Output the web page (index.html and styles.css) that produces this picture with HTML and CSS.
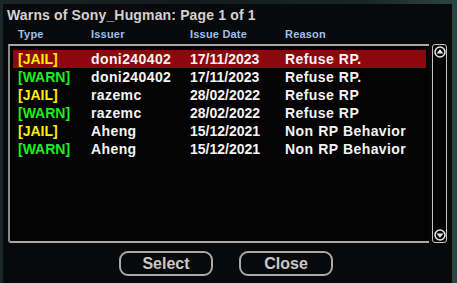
FILE: index.html
```html
<!DOCTYPE html>
<html lang="en">
<head>
    <meta charset="UTF-8">
    <title>Warns of Sony_Hugman</title>
    <link rel="stylesheet" href="styles.css">
</head>
<body>
    <div class="dialog">
        <div class="dialog-title">Warns of Sony_Hugman: Page 1 of 1</div>

        <!-- Column headers -->
        <div class="list-head">
            <span>Type</span>
            <span>Issuer</span>
            <span>Issue Date</span>
            <span>Reason</span>
        </div>

        <div class="list-area">
            <div class="list-box">
                <div class="row selected">
                    <span class="jail">[JAIL]</span><span class="txt">doni240402</span><span>17/11/2023</span><span class="txt">Refuse RP.</span>
                </div>
                <div class="row">
                    <span class="warn">[WARN]</span><span class="txt">doni240402</span><span>17/11/2023</span><span class="txt">Refuse RP.</span>
                </div>
                <div class="row">
                    <span class="jail">[JAIL]</span><span class="txt">razemc</span><span>28/02/2022</span><span class="txt">Refuse RP</span>
                </div>
                <div class="row">
                    <span class="warn">[WARN]</span><span class="txt">razemc</span><span>28/02/2022</span><span class="txt">Refuse RP</span>
                </div>
                <div class="row">
                    <span class="jail">[JAIL]</span><span class="txt">Aheng</span><span>15/12/2021</span><span class="txt">Non RP Behavior</span>
                </div>
                <div class="row">
                    <span class="warn">[WARN]</span><span class="txt">Aheng</span><span>15/12/2021</span><span class="txt">Non RP Behavior</span>
                </div>
            </div>

            <!-- Scroll bar -->
            <div class="scrollbar">
                <svg width="12" height="12" viewBox="0 0 12 12">
                    <circle cx="6" cy="6" r="5" fill="none" stroke="#e8e8e8" stroke-width="1.5"/>
                    <path d="M2.6 7.4 L6 3.2 L9.4 7.4 Z" fill="#e8e8e8"/>
                </svg>
                <svg width="12" height="12" viewBox="0 0 12 12">
                    <circle cx="6" cy="6" r="5" fill="none" stroke="#e8e8e8" stroke-width="1.5"/>
                    <path d="M2.6 4.6 L6 8.8 L9.4 4.6 Z" fill="#e8e8e8"/>
                </svg>
            </div>
        </div>

        <div class="buttons">
            <div class="btn">Select</div>
            <div class="btn">Close</div>
        </div>
    </div>
</body>
</html>
```

FILE: styles.css
```css
/* Page / game backdrop */
body {
    margin: 0;
    width: 457px;
    height: 283px;
    overflow: hidden;
    padding: 4px 5px 0 3px;
    box-sizing: border-box;
    background: linear-gradient(90deg, #1c2624 0%, #141a1a 40%, #1a2624 80%, #2c4644 100%);
    font-family: "Liberation Sans", Arial, sans-serif;
    font-weight: bold;
}

/* Dialog */
.dialog {
    height: 279px;
    background-color: #08090a;
    display: flex;
    flex-direction: column;
    padding: 0 5px 0 5px;
    box-sizing: border-box;
}

.dialog-title {
    color: #d2d2d2;
    font-size: 14px;
    line-height: 14px;
    letter-spacing: 0.15px;
    padding: 4px 0 0 0;
    margin-left: -1px;
}

.list-head {
    display: grid;
    grid-template-columns: 73px 99px 95px 1fr;
    padding-left: 10px;
    margin-top: 7px;
    color: #9cc0ec;
    font-size: 11px;
    line-height: 11px;
    letter-spacing: 0.2px;
}

/* List + scrollbar */
.list-area {
    display: flex;
    gap: 3px;
    margin-top: 4px;
    height: 199px;
}

.list-box {
    flex: 1;
    border-top: 2px solid #a8a8a8;
    border-left: 2px solid #8a8a8a;
    border-bottom: 2px solid #a8a8a8;
    border-bottom-left-radius: 3px;
    background-color: #030303;
    padding: 4px 3px 0 3px;
}

.row {
    display: grid;
    grid-template-columns: 73px 99px 95px 1fr;
    height: 18px;
    line-height: 18px;
    padding-left: 5px;
    color: #f4f4f4;
    font-size: 14px;
    white-space: nowrap;
}

.row .txt {
    letter-spacing: 0.4px;
    word-spacing: 0.5px;
}

.row.selected {
    background-color: #8e070c;
}

.jail {
    color: #fff000;
}

.warn {
    color: #1cf01c;
}

.scrollbar {
    width: 13px;
    border: 1px solid #c4c4c4;
    border-radius: 3px;
    display: flex;
    flex-direction: column;
    justify-content: space-between;
    align-items: center;
    padding: 1px 0;
    background-color: #050505;
}

/* Buttons */
.buttons {
    display: flex;
    justify-content: center;
    gap: 26px;
    margin-top: 8px;
    margin-left: -3px;
}

.btn {
    width: 90px;
    height: 21px;
    border: 2px solid #a9a9a9;
    border-radius: 9px;
    color: #c8c8c8;
    font-size: 16px;
    line-height: 21px;
    text-align: center;
}
```
